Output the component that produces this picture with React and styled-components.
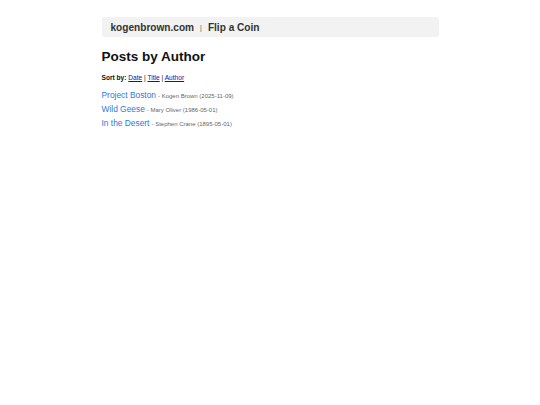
import React from "react";
import styled, { createGlobalStyle } from "styled-components";

const Global = createGlobalStyle`
  html, body { margin: 0; padding: 0; background: #fff; }
  body { font-family: "Liberation Sans", Arial, sans-serif; color: #111; }
`;

const Page = styled.div`
  width: 337px;
  margin: 0 auto;
  padding-top: 17px;
`;

const NavBar = styled.nav`
  display: flex;
  align-items: center;
  height: 20px;
  padding: 0 9px;
  background: #f2f2f2;
  border-radius: 2px;
  font-size: 10.1px;
  font-weight: bold;
  color: #333;
`;

const NavLink = styled.a`
  color: #333;
  text-decoration: none;
`;

const Sep = styled.span`
  font-size: 7px;
  font-weight: normal;
  margin: 1px 6px 0;
  color: #555;
`;

const Title = styled.h1`
  font-size: 13.5px;
  font-weight: bold;
  margin: 12px 0 0;
  line-height: 16px;
  color: #111;
`;

const SortBar = styled.div`
  margin-top: 8px;
  font-size: 6.6px;
  line-height: 9px;
  color: #111;
`;

const SortLabel = styled.b``;

const SortLink = styled.a`
  color: #1a0dab;
  text-decoration: underline;
`;

const PostList = styled.ul`
  list-style: none;
  margin: 6px 0 0;
  padding: 0;
`;

const PostItem = styled.li`
  display: flex;
  align-items: baseline;
  gap: 2px;
  height: 14px;
  line-height: 14px;
  font-size: 8.4px;
`;

const PostLink = styled.a`
  color: #2a7ae2;
  text-decoration: none;
`;

const Meta = styled.span`
  font-size: 6px;
  color: #666;
`;

const posts = [
  { title: "Project Boston", author: "Kogen Brown", date: "2025-11-09" },
  { title: "Wild Geese", author: "Mary Oliver", date: "1986-05-01" },
  { title: "In the Desert", author: "Stephen Crane", date: "1895-05-01" },
];

export default function App() {
  return (
    <>
      <Global />
      <Page>
        <NavBar>
          <NavLink href="#">kogenbrown.com</NavLink>
          <Sep>|</Sep>
          <NavLink href="#">Flip a Coin</NavLink>
        </NavBar>
        <Title>Posts by Author</Title>
        <SortBar>
          <SortLabel>Sort by:</SortLabel> <SortLink href="#">Date</SortLink> |{" "}
          <SortLink href="#">Title</SortLink> | <SortLink href="#">Author</SortLink>
        </SortBar>
        <PostList>
          {posts.map((p) => (
            <PostItem key={p.title}>
              <PostLink href="#">{p.title}</PostLink>
              <Meta>
                - {p.author} ({p.date})
              </Meta>
            </PostItem>
          ))}
        </PostList>
      </Page>
    </>
  );
}
